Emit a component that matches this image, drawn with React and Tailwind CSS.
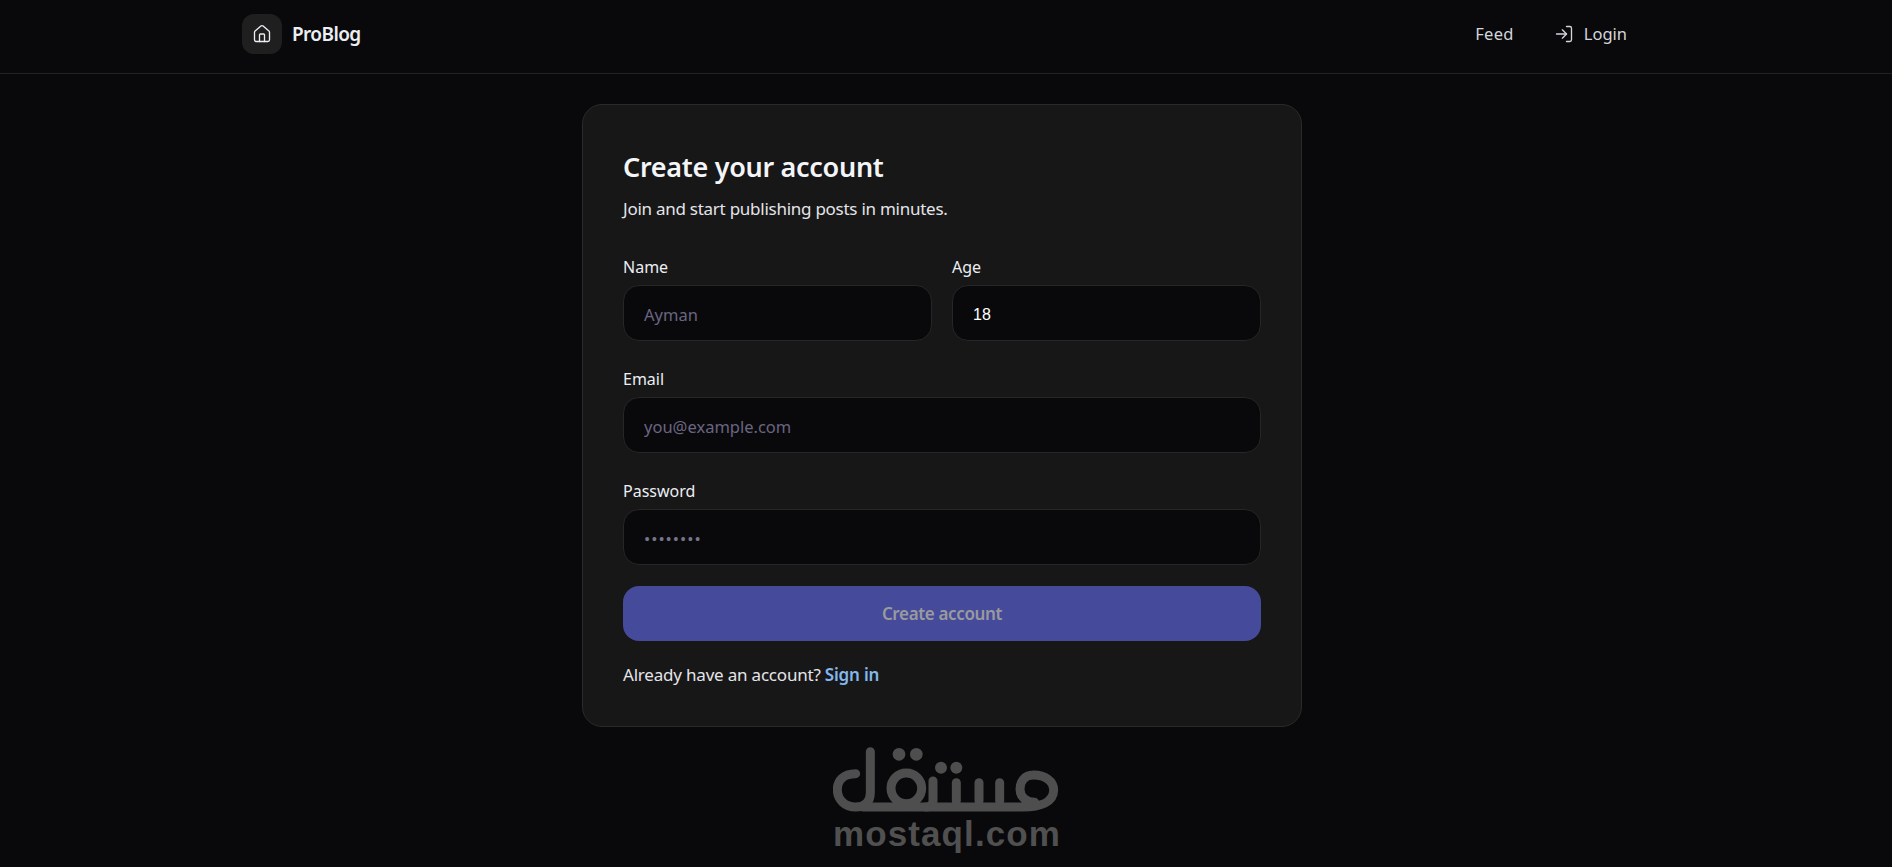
import React from "react";
import { House, LogIn } from "lucide-react";

function Field({ label, placeholder, value, type = "text", extra = "" }) {
  return (
    <label className="flex flex-col gap-[6px] min-w-0">
      <span className="text-[16px] leading-6 h-6 text-[#eceef4]">{label}</span>
      <input
        readOnly
        type={type}
        placeholder={placeholder}
        value={value}
        className={`h-[56px] w-full rounded-[16px] border border-[#262626] bg-[#09090b] px-[20px] pt-[3px] text-[16.5px] text-white placeholder:text-[#6a6582] outline-none ${extra}`}
      />
    </label>
  );
}

function Watermark() {
  return (
    <div className="absolute left-[833px] top-[746px] w-[228px] flex flex-col items-center pointer-events-none">
      <svg width="228" height="72" viewBox="100 45 684 216" fill="none" stroke="#4e4e4e" strokeWidth="27" strokeLinecap="round" strokeLinejoin="round">
        <path d="M168 128 C130 128 113 150 113 176 C113 205 135 228 168 228 C195 228 212 212 212 185 L212 62" />
        <path d="M190 228 L670 228 C720 228 762 215 762 177 C762 150 735 132 702 132 C672 132 661 155 661 175 C661 198 680 214 705 214" />
        <circle cx="320" cy="172" r="46" />
        <path d="M400 150 L400 210 C400 222 392 228 380 228" />
        <path d="M470 155 L470 210" />
        <path d="M538 155 L538 210" />
        <path d="M600 155 L600 210" />
        <g fill="#4e4e4e" stroke="none">
          <circle cx="298" cy="70" r="19" />
          <circle cx="350" cy="70" r="19" />
          <circle cx="424" cy="110" r="18" />
          <circle cx="470" cy="110" r="18" />
        </g>
      </svg>
      <div className="mt-[-1px] font-['Liberation_Sans'] font-bold text-[35px] leading-[34px] tracking-[1.1px] text-[#505050]">mostaql.com</div>
    </div>
  );
}

export default function App() {
  return (
    <div className="relative h-[867px] overflow-hidden bg-[#09090b] font-['Noto_Sans',sans-serif] text-white">
      <header className="h-[74px] border-b border-[#222222] pl-[242px] pr-[265px] pt-[14px] flex items-start justify-between">
        <div className="flex items-center gap-[10px]">
          <div className="w-10 h-10 rounded-[12px] bg-[#1f1f1f] flex items-center justify-center">
            <House size={20} strokeWidth={1.6} className="text-[#eceef4]" />
          </div>
          <span className="text-[19px] font-semibold text-[#eceef4] tracking-[-0.6px]">ProBlog</span>
        </div>
        <nav className="flex items-center gap-[40px] h-10 text-[16.5px] text-[#d4d6dc]">
          <span className="tracking-[0.3px]">Feed</span>
          <span className="flex items-center gap-[10px]">
            <LogIn size={20} strokeWidth={1.6} />
            Login
          </span>
        </nav>
      </header>
      <main className="flex justify-center pt-[30px] pr-[8px]">
        <section className="w-[720px] rounded-[20px] border border-[#2a2a2a] bg-[#171717] px-[40px] pt-[46px] pb-[39px]">
          <h1 className="text-[27px] leading-8 font-semibold tracking-[-0.3px] text-[#f4f5f8]">Create your account</h1>
          <p className="mt-[14px] text-[17px] leading-6 tracking-[-0.26px] text-[#e4e5ea]">Join and start publishing posts in minutes.</p>
          <div className="mt-[34px] flex flex-col gap-[26px]">
            <div className="grid grid-cols-2 gap-[20px]">
              <Field label="Name" placeholder="Ayman" value="" />
              <Field label="Age" value="18" extra="font-['Liberation_Sans'] text-[16px]" />
            </div>
            <Field label="Email" placeholder="you@example.com" value="" />
            <Field label="Password" type="password" placeholder="••••••••" value="" extra="tracking-[1px] placeholder:text-[#77758a]" />
          </div>
          <button className="mt-[21px] w-full h-[55px] rounded-[16px] bg-[#454a9a] text-[17px] font-semibold tracking-[-0.35px] text-[#9a9a9e]">Create account</button>
          <p className="mt-[22px] text-[17px] leading-6 tracking-[-0.2px] text-[#e4e5ea]">
            Already have an account? <span className="font-semibold text-[#84b8ec]">Sign in</span>
          </p>
        </section>
      </main>
      <Watermark />
    </div>
  );
}
